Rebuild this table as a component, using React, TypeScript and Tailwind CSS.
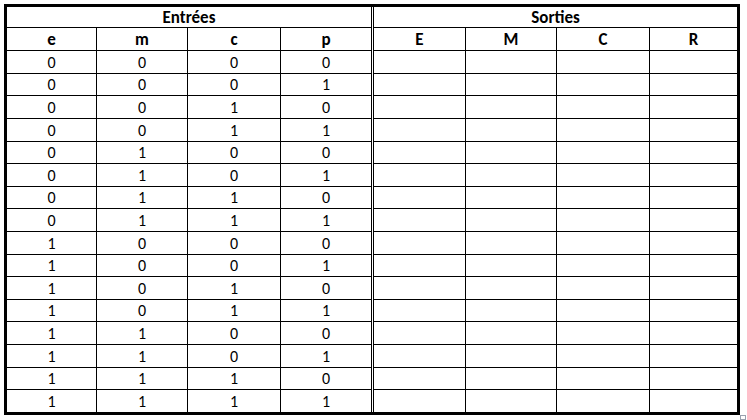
const font = { fontFamily: "Carlito, Calibri, Lato, 'Liberation Sans', sans-serif" }

// largeurs avec la bordure gauche comprise (box-sizing: border-box)
const entreeCols = [
  { label: "e", width: "w-[89px]" },
  { label: "m", width: "w-[91px]" },
  { label: "c", width: "w-[93px]" },
  { label: "p", width: "w-[91px]" },
]

const sortieCols = [
  { label: "E", width: "w-[91px]" },
  { label: "M", width: "w-[91px]" },
  { label: "C", width: "w-[93px]" },
  { label: "R", width: "w-[88px]" },
]

// 16 combinaisons de e, m, c, p
const rows = Array.from({ length: 16 }, (_, i) => [
  (i >> 3) & 1,
  (i >> 2) & 1,
  (i >> 1) & 1,
  i & 1,
])

// hauteurs des lignes pour tomber sur la grille d'origine
const tall = [true, false, true, true, false, true, false, true, true, false, true, false, true, true, false, true]

type Col = { label: string; width: string }

function Half({ title, cols, values }: { title: string; cols: Col[]; values?: number[][] }) {
  return (
    <div className="flex flex-col shrink-0">
      <div className="h-[21px] border-b border-black flex items-center justify-center pt-[1px] font-bold text-[17px] leading-none text-black">
        {title}
      </div>
      <div className="flex h-[23px] border-b border-black">
        {cols.map((col, j) => (
          <div
            key={col.label}
            className={`${col.width} shrink-0 flex items-center justify-center font-bold text-[17px] leading-none text-black ${j > 0 ? "border-l border-black" : ""}`}
          >
            {col.label}
          </div>
        ))}
      </div>
      {rows.map((_, i) => (
        <div
          key={i}
          className={`flex ${tall[i] ? "h-[22px]" : "h-[21px]"} ${i < rows.length - 1 ? "border-b border-black box-content" : ""}`}
        >
          {cols.map((col, j) => (
            <div
              key={col.label}
              className={`${col.width} shrink-0 flex items-center justify-center pt-[1px] text-[16px] leading-none text-black ${j > 0 ? "border-l border-black" : ""}`}
            >
              {values ? values[i][j] : ""}
            </div>
          ))}
        </div>
      ))}
    </div>
  )
}

export default function App() {
  return (
    <div className="relative w-[747px] h-[420px] bg-white pl-[4px] pt-[4px]" style={font}>
      <div className="flex w-[736px] border-[3px] border-black">
        <Half title="Entrées" cols={entreeCols} values={rows} />
        <div className="w-[3px] shrink-0 border-l-[3px] border-double border-black" />
        <Half title="Sorties" cols={sortieCols} />
      </div>
      {/* poignée de sélection en bas à droite */}
      <div className="absolute left-[740px] top-[415px] w-[6px] h-[5px] border border-gray-400 bg-white" />
    </div>
  )
}
